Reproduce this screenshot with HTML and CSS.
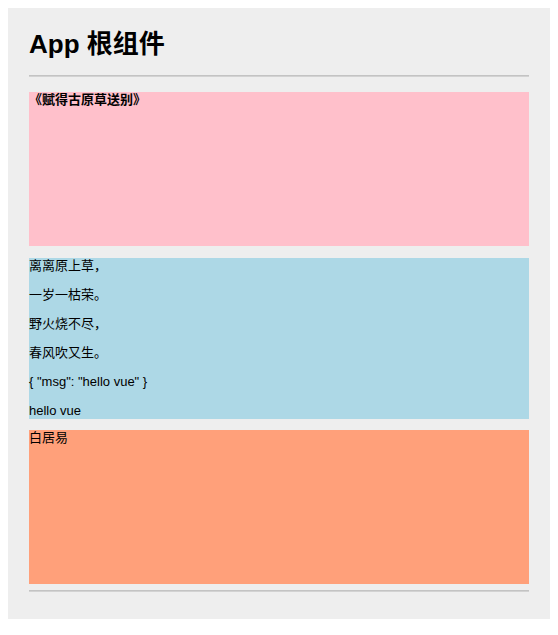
FILE: index.html
```html
<!DOCTYPE html>
<html lang="zh-CN">
<head>
  <meta charset="UTF-8">
  <title>App 根组件</title>
  <link rel="stylesheet" href="styles.css">
</head>
<body>
  <div id="app" class="app">
    <h1>App 根组件</h1>
    <hr>
    <!-- 左侧：标题组件 -->
    <div class="poem-title">
      <h3>《赋得古原草送别》</h3>
    </div>
    <!-- 中间：诗句组件 -->
    <div class="poem-body">
      <p>离离原上草，</p>
      <p>一岁一枯荣。</p>
      <p>野火烧不尽，</p>
      <p>春风吹又生。</p>
      <p>{ "msg": "hello vue" }</p>
      <p>hello vue</p>
    </div>
    <!-- 底部：作者组件 -->
    <div class="poem-author">白居易</div>
    <hr>
  </div>
</body>
</html>
```

FILE: styles.css
```css
body {
  margin: 8px;
  font-family: "Liberation Sans", "Noto Sans CJK SC", sans-serif;
  font-size: 13px;
  color: #000;
  background-color: #fff;
}

.app {
  background-color: #eeeeee;
  padding: 21px 21px 27px 21px;
}

h1 {
  font-size: 26px;
  line-height: 30px;
  margin: 0 0 16px 0;
}

hr {
  height: 0;
  margin: 0;
  border: none;
  border-top: 1px solid #c3c3c3;
  border-bottom: 1px solid #d2d2d2;
}

.poem-title {
  background-color: pink;
  height: 154px;
  margin-top: 15px;
}

.poem-title h3 {
  font-size: 13px;
  line-height: 16px;
  margin: 0;
}

.poem-body {
  background-color: lightblue;
  margin-top: 12px;
}

.poem-body p {
  line-height: 16px;
  margin: 0 0 13px 0;
}

.poem-body p:last-child {
  margin-bottom: 0;
}

.poem-author {
  background-color: lightsalmon;
  line-height: 16px;
  height: 154px;
  margin: 11px 0 6px 0;
}
```
